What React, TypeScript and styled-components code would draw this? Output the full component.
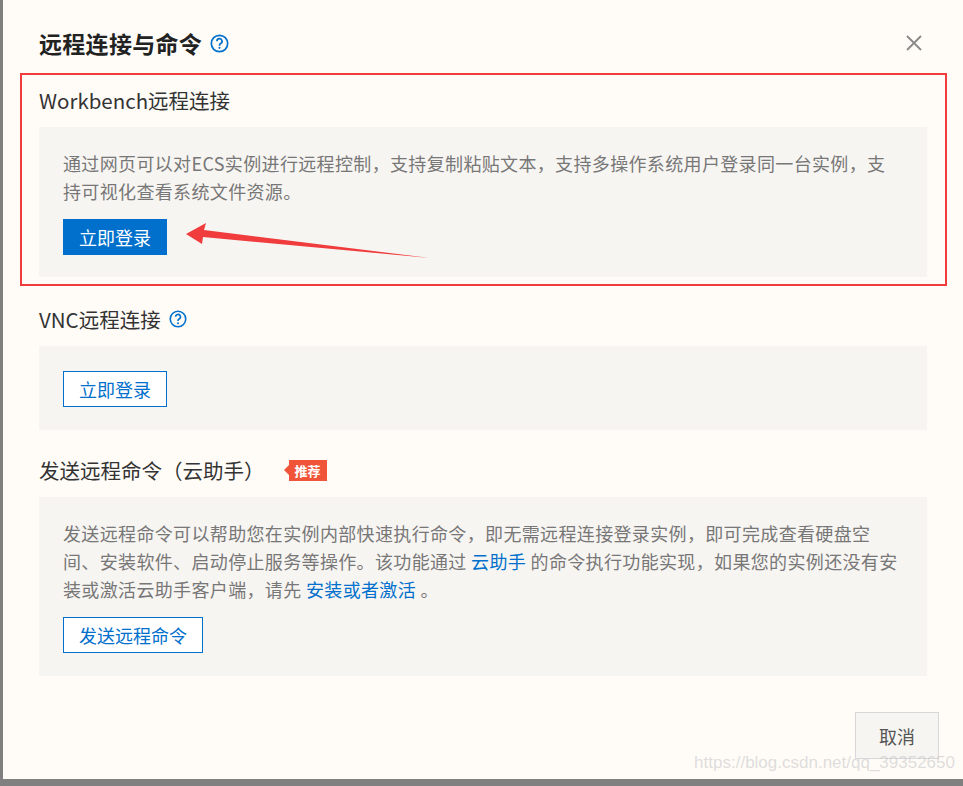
import React from "react";
import styled, { createGlobalStyle } from "styled-components";

const Global = createGlobalStyle`
  html, body { margin: 0; padding: 0; background: #808080; }
  body { font-family: "Microsoft YaHei", "Noto Sans CJK SC", "Noto Sans", sans-serif; }
`;

const Page = styled.div`
  width: 963px; height: 786px; display: flex; flex-direction: column; overflow: hidden;
`;
const Modal = styled.div`
  position: relative; margin-left: 3px; height: 779px; background: #fffcf8;
  padding: 26px 36px 0 36px; box-sizing: border-box; display: flex; flex-direction: column;
`;
const Header = styled.div`
  display: flex; align-items: center; gap: 8px; height: 34px;
`;
const Title = styled.h1`
  margin: 0; font-size: 23px; font-weight: 700; color: #222; letter-spacing: 0.3px;
`;
const Close = styled.div`
  margin-left: auto; margin-right: 4px; color: #888; display: flex;
`;
const Section = styled.div<{ $top: number }>`
  margin-top: ${p => p.$top}px; display: flex; flex-direction: column;
`;
const SecTitle = styled.div`
  display: flex; align-items: center; gap: 8px; font-size: 20.5px; color: #333; height: 28px;
`;
const Box = styled.div<{ $pb: number }>`
  margin-top: 13px; background: #f7f5f2; padding: 22px 24px ${p => p.$pb}px 24px;
  width: 888px; box-sizing: border-box;
`;
const Text = styled.p`
  margin: 0 0 14px; font-size: 18px; letter-spacing: 0.35px; line-height: 28px; color: #777;
`;
const Link = styled.span` color: #0070cc; `;
const Btn = styled.button<{ $primary?: boolean }>`
  height: 36px; padding: 0 15px; font-size: 18px; font-family: inherit; border-radius: 0;
  border: 1px solid #0070cc; cursor: pointer;
  background: ${p => (p.$primary ? "#0070cc" : "#fff")};
  color: ${p => (p.$primary ? "#fff" : "#0070cc")};
`;
const Badge = styled.span`
  position: relative; margin-left: 16px; background: #f0553a; color: #fff; font-size: 13px;
  font-weight: 700; padding: 0 6px; height: 21px; line-height: 21px;
  &::before { content: ""; position: absolute; left: -5px; top: 5px;
    border-right: 5px solid #f0553a; border-top: 5px solid transparent; border-bottom: 5px solid transparent; }
`;
const Footer = styled.div`
  margin-top: 36px; display: flex; justify-content: flex-end; margin-right: -12px;
`;
const Cancel = styled.button`
  width: 84px; height: 47px; background: #f7f5f2; border: 1px solid #d8d8d8; color: #555;
  font-size: 18px; font-family: inherit;
`;
const RedFrame = styled.div`
  position: absolute; left: 17px; top: 73px; width: 927px; height: 213px;
  border: 2px solid #f03c3c; box-sizing: border-box; pointer-events: none;
`;
const Arrow = styled.svg` position: absolute; left: 175px; top: 218px; `;
const Watermark = styled.div`
  position: absolute; right: 8px; bottom: 6px; font-family: "Liberation Sans", Arial, sans-serif;
  font-size: 17px; color: rgba(200,200,200,0.6);
`;

const Help = ({ size = 18 }: { size?: number }) => (
  <svg width={size} height={size} viewBox="0 0 20 20">
    <circle cx="10" cy="10" r="8.6" fill="none" stroke="#0070cc" strokeWidth="1.8" />
    <path d="M7.3 7.6a2.7 2.7 0 1 1 3.8 2.5c-.8.4-1.1.9-1.1 1.8v.4" fill="none" stroke="#0070cc" strokeWidth="1.8" />
    <circle cx="10" cy="14.6" r="1.1" fill="#0070cc" />
  </svg>
);

export default function App() {
  return (
    <Page>
      <Global />
      <Modal>
        <Header>
          <Title>远程连接与命令</Title>
          <Help size={19} />
          <Close>
            <svg width="18" height="18" viewBox="0 0 18 18"><path d="M2 2L16 16M16 2L2 16" stroke="#888" strokeWidth="1.8" /></svg>
          </Close>
        </Header>
        <Section $top={26}>
          <SecTitle>Workbench远程连接</SecTitle>
          <Box $pb={22}>
            <Text>通过网页可以对ECS实例进行远程控制，支持复制粘贴文本，支持多操作系统用户登录同一台实例，支持可视化查看系统文件资源。</Text>
            <Btn $primary>立即登录</Btn>
          </Box>
        </Section>
        <Section $top={28}>
          <SecTitle>VNC远程连接 <Help /></SecTitle>
          <Box $pb={23}>
            <Btn style={{ marginTop: 3 }}>立即登录</Btn>
          </Box>
        </Section>
        <Section $top={26}>
          <SecTitle>发送远程命令（云助手）<Badge>推荐</Badge></SecTitle>
          <Box $pb={23}>
            <Text>发送远程命令可以帮助您在实例内部快速执行命令，即无需远程连接登录实例，即可完成查看硬盘空间、安装软件、启动停止服务等操作。该功能通过 <Link>云助手</Link> 的命令执行功能实现，如果您的实例还没有安装或激活云助手客户端，请先 <Link>安装或者激活</Link> 。</Text>
            <Btn>发送远程命令</Btn>
          </Box>
        </Section>
        <Footer><Cancel>取消</Cancel></Footer>
        <RedFrame />
        <Arrow width="260" height="45" viewBox="0 0 260 45">
          <path d="M8 16 L28 5 L26 12 L252 40 L25 19 L24 26 Z" fill="#f03c3c" />
        </Arrow>
        <Watermark>https://blog.csdn.net/qq_39352650</Watermark>
      </Modal>
    </Page>
  );
}
